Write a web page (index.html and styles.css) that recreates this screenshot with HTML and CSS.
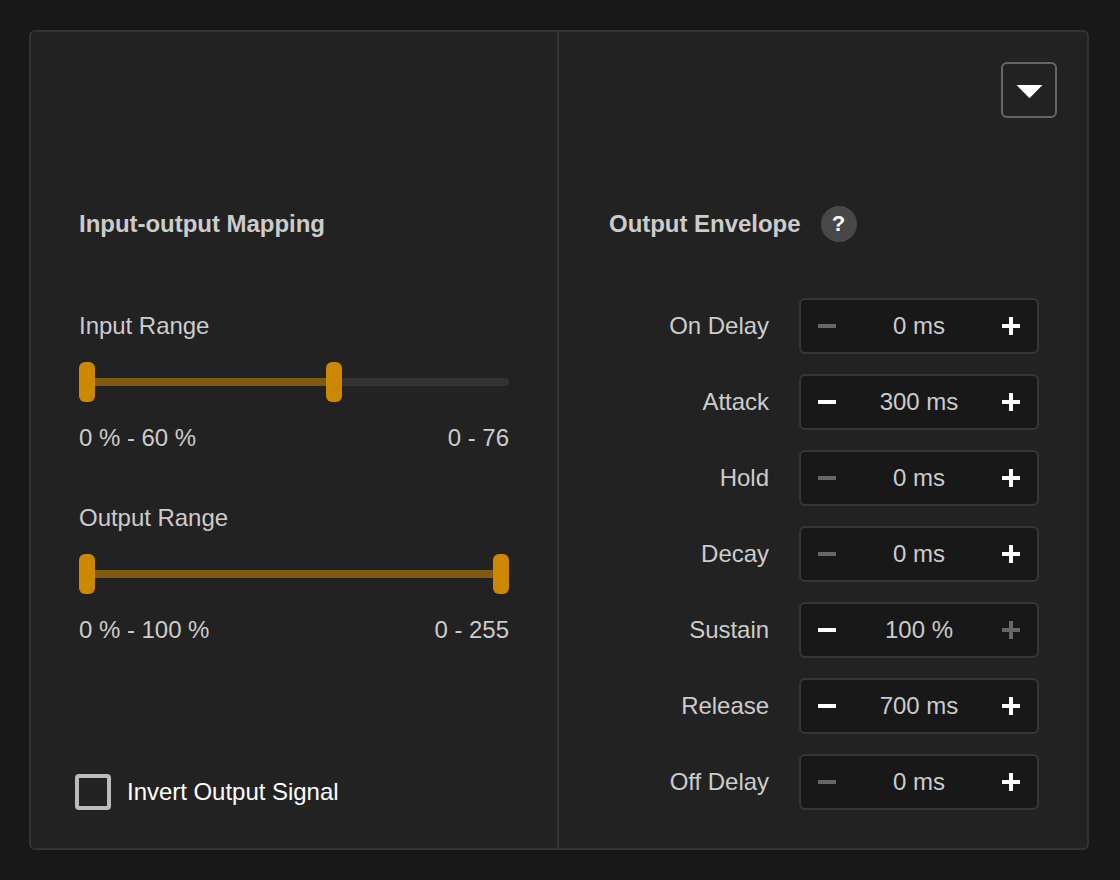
FILE: index.html
```html
<!DOCTYPE html>
<html lang="en">
<head>
<meta charset="utf-8">
<title>Signal Mapping</title>
<link rel="stylesheet" href="styles.css">
</head>
<body>
<main class="panel">
  <section class="mapping">
    <h2 class="title">Input-output Mapping</h2>
    <div class="range">
      <div class="range-name">Input Range</div>
      <div class="slider"><span class="thumb"></span><span class="fill fill-input"></span><span class="thumb"></span><span class="rest"></span></div>
      <div class="values"><span>0 % - 60 %</span><span>0 - 76</span></div>
    </div>
    <div class="range">
      <div class="range-name">Output Range</div>
      <div class="slider"><span class="thumb"></span><span class="fill fill-output"></span><span class="thumb"></span></div>
      <div class="values"><span>0 % - 100 %</span><span>0 - 255</span></div>
    </div>
    <label class="invert"><span class="box"></span>Invert Output Signal</label>
  </section>
  <section class="envelope">
    <div class="toolbar"><button class="menu" aria-label="Menu"><svg width="28" height="16" viewBox="0 0 28 16"><path d="M1.5 2H27.5L14.5 15.2Z" fill="#fff"/></svg></button></div>
    <div class="heading"><h2 class="title">Output Envelope</h2><span class="help">?</span></div>
    <div class="rows">
      <div class="row"><span>On Delay</span><div class="stepper"><i class="minus off"></i><span>0 ms</span><i class="plus"></i></div></div>
      <div class="row"><span>Attack</span><div class="stepper"><i class="minus"></i><span>300 ms</span><i class="plus"></i></div></div>
      <div class="row"><span>Hold</span><div class="stepper"><i class="minus off"></i><span>0 ms</span><i class="plus"></i></div></div>
      <div class="row"><span>Decay</span><div class="stepper"><i class="minus off"></i><span>0 ms</span><i class="plus"></i></div></div>
      <div class="row"><span>Sustain</span><div class="stepper"><i class="minus"></i><span>100 %</span><i class="plus off"></i></div></div>
      <div class="row"><span>Release</span><div class="stepper"><i class="minus"></i><span>700 ms</span><i class="plus"></i></div></div>
      <div class="row"><span>Off Delay</span><div class="stepper"><i class="minus off"></i><span>0 ms</span><i class="plus"></i></div></div>
    </div>
  </section>
</main>
</body>
</html>
```
FILE: styles.css
```css
* { box-sizing: border-box; }
body {
  margin: 0;
  height: 880px;
  padding: 30px 31px 30px 29px;
  background: #181818;
  color: #ccc;
  font: 24px/28px "Liberation Sans", Arial, sans-serif;
  letter-spacing: -0.03px;
}
.panel {
  display: grid;
  grid-template-columns: 528px 1fr;
  height: 820px;
  background: #222;
  border: 2px solid #333;
  border-radius: 6px;
}
.title { margin: 0; font-size: 24px; line-height: 28px; font-weight: 700; }
.mapping {
  display: flex;
  flex-direction: column;
  padding: 178px 48px 38px;
  border-right: 2px solid #333;
}
.range { height: 192px; }
.title + .range { margin-top: 74px; }
.slider { display: flex; align-items: center; height: 40px; margin-top: 22px; }
.thumb { width: 16px; height: 40px; border-radius: 6px; background: #c80; }
.fill { height: 8px; background: #805b0f; }
.fill-input { width: 231px; }
.fill-output { flex: 1; }
.rest { flex: 1; height: 8px; border-radius: 0 4px 4px 0; background: #333; }
.values { display: flex; justify-content: space-between; margin-top: 22px; }
.invert { display: flex; align-items: center; gap: 16px; margin: auto 0 0 -4px; color: #fff; }
.box { width: 36px; height: 36px; border: 4px solid #bbb; border-radius: 4px; }
.envelope { padding: 30px 30px 0 50px; }
.toolbar { display: flex; justify-content: flex-end; }
.menu {
  display: grid;
  place-items: center;
  width: 56px;
  height: 56px;
  padding: 0;
  background: #222;
  border: 2px solid #666;
  border-radius: 6px;
}
.menu svg { display: block; }
.menu path { transform: translateY(1px); }
.heading { display: flex; align-items: center; gap: 20px; height: 36px; margin-top: 88px; }
.help {
  width: 36px;
  height: 36px;
  border-radius: 50%;
  background: #484848;
  color: #fff;
  text-align: center;
  font-size: 22px;
  line-height: 36px;
  font-weight: 700;
}
.rows { display: grid; gap: 20px; margin: 56px 18px 0 0; }
.row { display: flex; align-items: center; justify-content: flex-end; gap: 30px; }
.stepper {
  display: flex;
  align-items: center;
  justify-content: space-between;
  width: 240px;
  height: 56px;
  padding: 0 17px;
  background: #181818;
  border: 2px solid #363636;
  border-radius: 6px;
}
.minus, .plus { width: 18px; height: 18px; background: linear-gradient(#fff, #fff) center / 18px 4px no-repeat; }
.plus { background: linear-gradient(#fff, #fff) center / 18px 4px no-repeat, linear-gradient(#fff, #fff) center / 4px 18px no-repeat; }
.off { opacity: .34; }
```
